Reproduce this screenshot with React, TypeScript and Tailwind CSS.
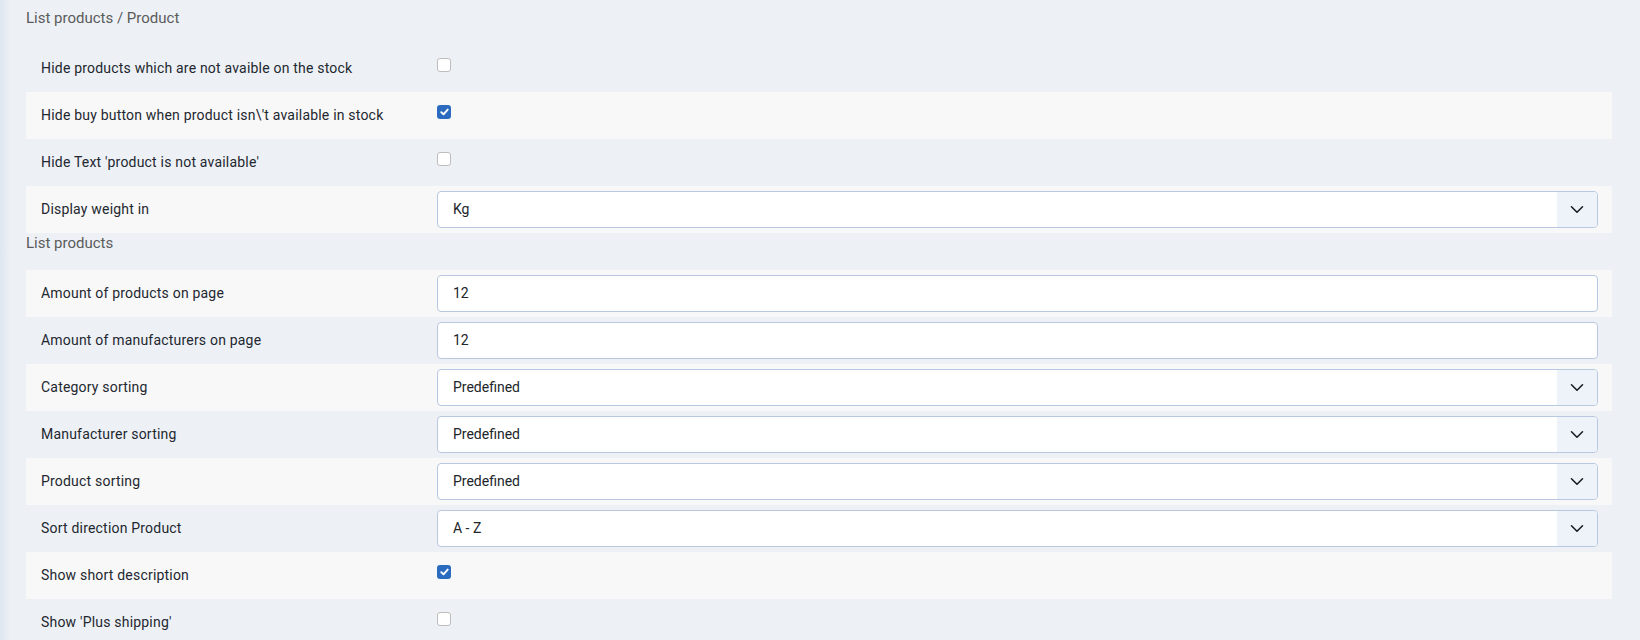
import React from "react";

type Field =
  | { label: string; type: "checkbox"; checked: boolean }
  | { label: string; type: "select"; value: string }
  | { label: string; type: "input"; value: string };

const productFields: Field[] = [
  { label: "Hide products which are not avaible on the stock", type: "checkbox", checked: false },
  { label: "Hide buy button when product isn\\'t available in stock", type: "checkbox", checked: true },
  { label: "Hide Text 'product is not available'", type: "checkbox", checked: false },
  { label: "Display weight in", type: "select", value: "Kg" },
];

const listFields: Field[] = [
  { label: "Amount of products on page", type: "input", value: "12" },
  { label: "Amount of manufacturers on page", type: "input", value: "12" },
  { label: "Category sorting", type: "select", value: "Predefined" },
  { label: "Manufacturer sorting", type: "select", value: "Predefined" },
  { label: "Product sorting", type: "select", value: "Predefined" },
  { label: "Sort direction Product", type: "select", value: "A - Z" },
  { label: "Show short description", type: "checkbox", checked: true },
  { label: "Show 'Plus shipping'", type: "checkbox", checked: false },
];

function Checkbox({ checked }: { checked: boolean }) {
  if (checked) {
    return (
      <span className="mb-[7px] flex h-[14px] w-[14px] items-center justify-center rounded-[3px] bg-[#2a6bc0]">
        <svg width="9" height="8" viewBox="0 0 9 8" fill="none">
          <path d="M1.3 4.2l2.2 2.1L7.7 1.6" stroke="#fff" strokeWidth="1.9" strokeLinecap="round" strokeLinejoin="round" />
        </svg>
      </span>
    );
  }
  return <span className="mb-[7px] block h-[14px] w-[14px] rounded-[3px] border border-[#bdbdbd] bg-white" />;
}

function Control({ field }: { field: Field }) {
  if (field.type === "checkbox") return <Checkbox checked={field.checked} />;
  if (field.type === "input") {
    return (
      <div className="flex h-[37px] flex-1 items-center rounded-[4px] border border-[#b8c8e0] bg-white pl-[15px] text-[14px] text-[#212529]">
        {field.value}
      </div>
    );
  }
  return (
    <div className="flex h-[37px] flex-1 overflow-hidden rounded-[4px] border border-[#b8c8e0] bg-white text-[14px] text-[#212529]">
      <div className="flex flex-1 items-center pl-[15px]">{field.value}</div>
      <div className="flex w-[40px] items-center justify-center bg-[#eef3fa]">
        <svg width="14" height="9" viewBox="0 0 14 9" fill="none">
          <path d="M1.5 1.8l5.5 5.4 5.5-5.4" stroke="#1a1d21" strokeWidth="1.6" strokeLinecap="round" strokeLinejoin="round" />
        </svg>
      </div>
    </div>
  );
}

function Row({ field, shaded }: { field: Field; shaded: boolean }) {
  return (
    <div className={`flex h-[47px] items-center pl-[15px] pr-[14px] ${shaded ? "bg-[#f8f8f8]" : ""}`}>
      <div className="w-[396px] shrink-0 text-[14px] tracking-[0.2px] text-[#23272f]">{field.label}</div>
      <Control field={field} />
    </div>
  );
}

export default function App() {
  return (
    <div
      className="flex h-[640px] w-full overflow-hidden bg-[#edf1f6]"
      style={{ fontFamily: "Roboto, 'Noto Sans', Arial, sans-serif" }}
    >
      <div className="w-[10px] shrink-0 bg-gradient-to-r from-[#dde5f0] to-[#edf1f6]" />
      <div className="w-[1602px] shrink-0 pl-[16px]">
        <div className="pt-[8px] pb-[17px] text-[15px] leading-[20px] text-[#5b5b5b]">List products / Product</div>
        {productFields.map((f, i) => (
          <Row key={f.label} field={f} shaded={i % 2 === 1} />
        ))}
        <div className="pb-[17px] text-[15px] leading-[20px] text-[#5b5b5b]">List products</div>
        {listFields.map((f, i) => (
          <Row key={f.label} field={f} shaded={i % 2 === 0} />
        ))}
      </div>
    </div>
  );
}
